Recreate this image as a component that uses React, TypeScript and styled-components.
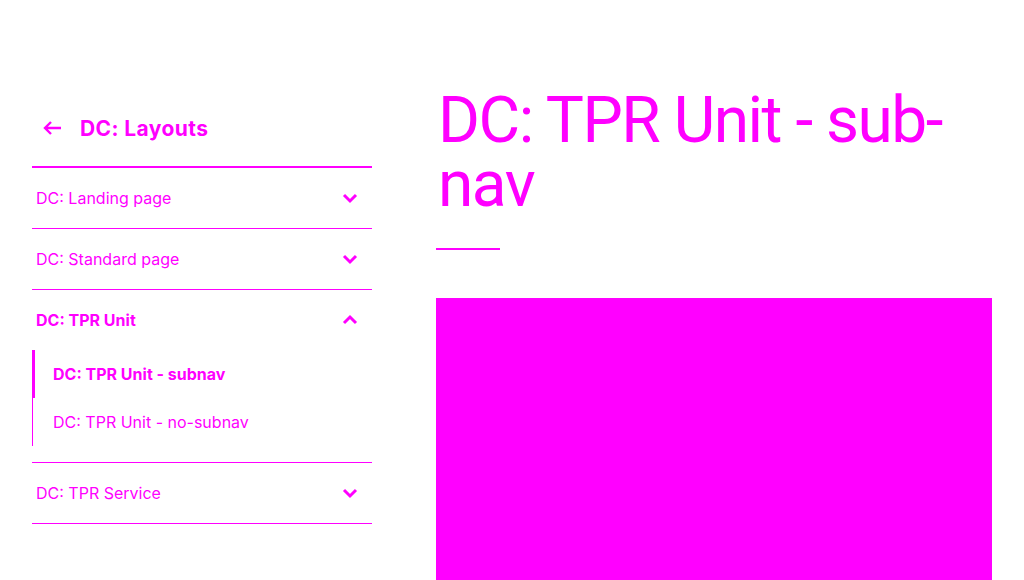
import React from "react";
import styled, { createGlobalStyle } from "styled-components";

const C = "#ff00ff";

const Global = createGlobalStyle`
  html, body { margin: 0; padding: 0; background: #fff; }
  body { font-family: Inter, "Liberation Sans", sans-serif; color: ${C}; }
  * { box-sizing: border-box; }
`;

const Page = styled.div`
  display: grid;
  grid-template-columns: 340px 556px;
  column-gap: 64px;
  padding: 88px 32px 0 32px;
  height: 580px;
  overflow: hidden;
`;

const Side = styled.nav`
  display: flex;
  flex-direction: column;
`;

const Back = styled.a`
  display: flex;
  align-items: center;
  gap: 18px;
  padding: 2px 0 0 10px;
  height: 80px;
  font-size: 21px;
  font-weight: 700;
  letter-spacing: 0.4px;
  color: ${C};
  text-decoration: none;
  border-bottom: 2px solid ${C};
`;

const Section = styled.div`
  border-bottom: 1px solid ${C};
`;

const Row = styled.div<{ $bold?: boolean }>`
  display: flex;
  align-items: center;
  justify-content: space-between;
  height: 60px;
  padding: 0 14px 0 4px;
  font-size: 16px;
  font-weight: ${(p) => (p.$bold ? 700 : 400)};
`;

const SubList = styled.div`
  display: flex;
  flex-direction: column;
  margin: 0 0 16px 0;
  border-left: 1px solid ${C};
`;

const SubItem = styled.div<{ $active?: boolean }>`
  display: flex;
  align-items: center;
  height: 48px;
  margin-left: -1px;
  font-size: 16px;
  font-weight: ${(p) => (p.$active ? 700 : 400)};
  border-left: ${(p) => (p.$active ? "3px" : "1px")} solid ${C};
  padding-left: ${(p) => (p.$active ? "18px" : "20px")};
`;

const Main = styled.main`
  display: flex;
  flex-direction: column;
`;

const Title = styled.h1`
  margin: 0;
  padding: 1px 0 0 2px;
  font-family: Roboto, "Liberation Sans", sans-serif;
  font-size: 64px;
  line-height: 64px;
  font-weight: 400;
  letter-spacing: -1.5px;
`;

const Rule = styled.div`
  width: 64px;
  height: 2px;
  background: ${C};
  margin-top: 31px;
`;

const Hero = styled.div`
  margin-top: 48px;
  height: 300px;
  background: ${C};
`;

const Chevron = ({ up }: { up?: boolean }) => (
  <svg width="16" height="12" viewBox="0 0 16 12">
    <path
      d={up ? "M2 9 L8 3 L14 9" : "M2 3 L8 9 L14 3"}
      fill="none"
      stroke={C}
      strokeWidth="3"
    />
  </svg>
);

const Arrow = () => (
  <svg width="20" height="16" viewBox="0 0 20 16">
    <path d="M19 8 H3 M9 2 L3 8 L9 14" fill="none" stroke={C} strokeWidth="2.4" />
  </svg>
);

export default function App() {
  return (
    <>
      <Global />
      <Page>
        <Side>
          <Back href="#">
            <Arrow />
            DC: Layouts
          </Back>
          <Section>
            <Row>
              DC: Landing page <Chevron />
            </Row>
          </Section>
          <Section>
            <Row>
              DC: Standard page <Chevron />
            </Row>
          </Section>
          <Section>
            <Row $bold>
              DC: TPR Unit <Chevron up />
            </Row>
            <SubList>
              <SubItem $active>DC: TPR Unit - subnav</SubItem>
              <SubItem>DC: TPR Unit - no-subnav</SubItem>
            </SubList>
          </Section>
          <Section>
            <Row>
              DC: TPR Service <Chevron />
            </Row>
          </Section>
        </Side>
        <Main>
          <Title>DC: TPR Unit - sub-nav</Title>
          <Rule />
          <Hero />
        </Main>
      </Page>
    </>
  );
}
